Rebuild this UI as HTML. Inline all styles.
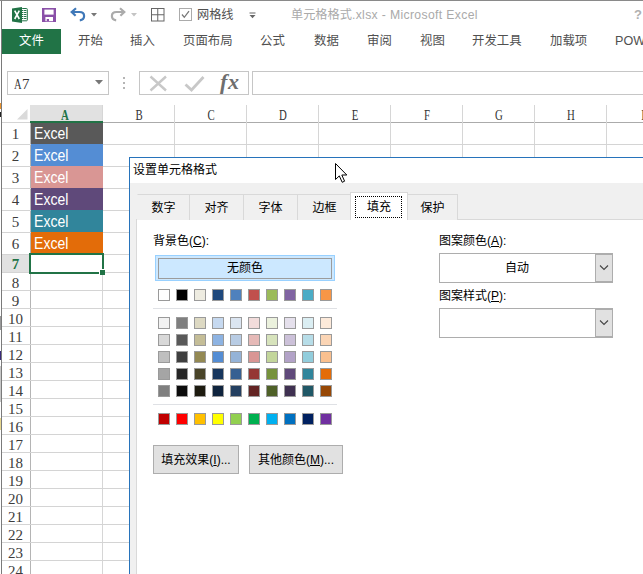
<!DOCTYPE html>
<html lang="zh-CN"><head><meta charset="utf-8"><title>Excel</title>
<style>
*{box-sizing:border-box;margin:0;padding:0}
html,body{width:643px;height:574px;overflow:hidden;background:#fff}
body{position:relative;font-family:"Liberation Sans","Noto Sans CJK SC",sans-serif;font-size:12px;color:#444}
.a{position:absolute}
.t{position:absolute;white-space:nowrap;line-height:16px;height:16px}
.rt{position:absolute;top:33px;white-space:nowrap;line-height:16px;height:16px;font-size:12.4px;color:#505050}
.hl{position:absolute;height:1px;background:#d4d4d4}
.vl{position:absolute;width:1px;background:#d6d6d6}
.rn{position:absolute;left:2px;width:27px;text-align:center;font-family:"Liberation Serif",serif;font-size:15px;color:#3c3c3c;line-height:18px;height:18px}
.cn{position:absolute;top:106px;width:72px;text-align:center;font-family:"Liberation Serif",serif;font-size:15px;color:#333;line-height:18px;height:18px;transform:scaleX(0.72)}
.cell{position:absolute;left:31px;width:72px;height:22px;color:#fff}
.cell span{position:absolute;left:3px;top:0;font-size:15.8px;line-height:23px;transform:scaleX(0.89);transform-origin:0 50%}
.sw{position:absolute;width:12px;height:12px;border:1px solid #9a9a9a}
.tab{position:absolute;top:194px;height:26px;border:1px solid #d9d9d9;border-bottom:none;background:#f0f0f0;color:#000;text-align:center;line-height:27px;font-size:12px}
.dl{position:absolute;color:#000;font-size:12px;line-height:16px;white-space:nowrap}
.btn{position:absolute;border:1px solid #adadad;background:#e1e1e1;color:#000;font-size:12px;text-align:center;white-space:nowrap}
u{text-decoration:underline}
</style></head><body>

<div class="a" style="left:1px;top:0;width:1px;height:574px;background:#7a7a7a"></div>
<div class="a" style="left:0;top:0;width:643px;height:1px;background:#8a8a8a"></div>
<div class="a" style="left:0;top:103px;width:1px;height:6px;background:#e8922c"></div><div class="a" style="left:0;top:112px;width:1px;height:5px;background:#222"></div><div class="a" style="left:0;top:316px;width:1px;height:14px;background:#999"></div><div class="a" style="left:0;top:351px;width:1px;height:9px;background:#3a2a7a"></div><div class="a" style="left:0;top:366px;width:1px;height:36px;background:#c8c8c8"></div><div class="a" style="left:0;top:418px;width:1px;height:12px;background:#e8d890"></div>
<svg class="a" style="left:12px;top:7px" width="17" height="17" viewBox="0 0 17 17">
<rect x="9.5" y="1.5" width="5.8" height="12.3" rx="0.8" fill="#fff" stroke="#217346" stroke-width="1"/>
<path d="M10 3.5h4.4M10 5.5h4.4M10 7.5h4.4M10 9.5h4.4M10 11.5h4.4" stroke="#217346" stroke-width="1"/>
<path d="M11.6 2.5v10.5" stroke="#fff" stroke-width="0.7"/>
<path d="M0 1.4 L10 0 L10 16 L0 14.5 Z" fill="#217346"/>
<path d="M2.7 3.7 L7.3 12 M7.3 3.7 L2.7 12" stroke="#fff" stroke-width="1.6"/>
</svg>
<svg class="a" style="left:42px;top:8px" width="14" height="14" viewBox="0 0 14 14">
<rect x="0" y="0" width="14" height="14" fill="#8a50a8"/>
<rect x="2.4" y="1.6" width="9.2" height="5" fill="#fff"/>
<rect x="3.4" y="9" width="7.6" height="4.2" fill="#fff"/>
<rect x="4.7" y="11" width="2.3" height="2.2" fill="#8a50a8"/>
</svg>
<svg class="a" style="left:70px;top:7px" width="16" height="15" viewBox="0 0 16 15">
<path d="M2.5 5 H9.5 C12.6 5 14.1 6.9 14.1 9 C14.1 11.4 12.4 13 9.8 13.3" fill="none" stroke="#3f78b8" stroke-width="2.2"/>
<path d="M6 1.2 L1.7 5 L5.6 8.7" fill="none" stroke="#3f78b8" stroke-width="2.2"/>
</svg>
<svg class="a" style="left:91px;top:13px" width="6" height="4"><path d="M0 0H6L3 3.5Z" fill="#777"/></svg>
<svg class="a" style="left:110px;top:7px" width="16" height="15" viewBox="0 0 16 15">
<path d="M13.5 5 H6.5 C3.4 5 1.9 6.9 1.9 9 C1.9 11.4 3.6 13 6.2 13.3" fill="none" stroke="#ababab" stroke-width="2.2"/>
<path d="M10 1.2 L14.3 5 L10.4 8.7" fill="none" stroke="#ababab" stroke-width="2.2"/>
</svg>
<svg class="a" style="left:131px;top:13px" width="6" height="4"><path d="M0 0H6L3 3.5Z" fill="#c4c4c4"/></svg>
<svg class="a" style="left:151px;top:8px" width="14" height="14" viewBox="0 0 14 14">
<rect x="0.5" y="0.5" width="12.5" height="12.5" fill="none" stroke="#666" stroke-width="1"/>
<path d="M6.75 0.5V13M0.5 6.75H13" stroke="#666" stroke-width="1"/></svg>
<svg class="a" style="left:179px;top:8px" width="13" height="13" viewBox="0 0 13 13">
<rect x="0.5" y="0.5" width="12" height="12" fill="#fff" stroke="#ababab"/>
<path d="M3 6.5 L5.3 9.3 L10 3.2" fill="none" stroke="#777" stroke-width="1.3"/></svg>
<div class="t" style="left:197px;top:7px;font-size:12.2px;color:#505050">网格线</div>
<svg class="a" style="left:249px;top:12px" width="7" height="7"><rect x="0.5" y="0.5" width="6" height="1" fill="#666"/><path d="M0.5 3H6.5L3.5 6.3Z" fill="#666"/></svg>
<div class="t" style="left:291px;top:7px;font-size:12.2px;color:#aaa"><span>单元格格式</span><span style="letter-spacing:0.35px">.xlsx - Microsoft Excel</span></div>
<div class="t" style="left:634px;top:7px;font-size:13px;font-weight:bold;color:#b0b0b0">?</div>
<div class="a" style="left:2px;top:29px;width:59px;height:25px;background:#217346"></div>
<div class="rt" style="left:19px;color:#fff">文件</div>
<div class="rt" style="left:78px">开始</div>
<div class="rt" style="left:130px">插入</div>
<div class="rt" style="left:183px">页面布局</div>
<div class="rt" style="left:260px">公式</div>
<div class="rt" style="left:314px">数据</div>
<div class="rt" style="left:367px">审阅</div>
<div class="rt" style="left:420px">视图</div>
<div class="rt" style="left:472px">开发工具</div>
<div class="rt" style="left:550px">加载项</div>
<div class="rt" style="left:615px;font-size:12.6px">POWERPIVOT</div>
<div class="a" style="left:7px;top:71px;width:102px;height:24px;border:1px solid #c6c6c6;background:#fff"></div>
<div class="t" style="left:14px;top:75px;font-family:'Liberation Serif',serif;font-size:15px;line-height:18px;height:18px;color:#333"><span style="display:inline-block;transform:scaleX(0.7);transform-origin:0 50%;width:8px">A</span><span>7</span></div>
<svg class="a" style="left:95px;top:80px" width="8" height="5"><path d="M0 0H8L4 4.5Z" fill="#777"/></svg>
<div class="a" style="left:123px;top:77px;width:2px;height:2px;background:#b5b5b5"></div><div class="a" style="left:123px;top:82px;width:2px;height:2px;background:#b5b5b5"></div><div class="a" style="left:123px;top:87px;width:2px;height:2px;background:#b5b5b5"></div>
<div class="a" style="left:139px;top:71px;width:110px;height:24px;border:1px solid #c6c6c6;background:#fff"></div>
<svg class="a" style="left:149px;top:75px" width="19" height="17" viewBox="0 0 19 17"><path d="M1.5 1.5L17 15.5M17 1.5L1.5 15.5" stroke="#c8c8c8" stroke-width="2.4"/></svg>
<svg class="a" style="left:184px;top:75px" width="21" height="17" viewBox="0 0 21 17"><path d="M1.5 9.5L7.5 15L19.5 2" fill="none" stroke="#c8c8c8" stroke-width="2.8"/></svg>
<div class="a" style="left:220px;top:69px;width:24px;height:26px;font-family:'Liberation Serif',serif;font-style:italic;font-weight:bold;font-size:22px;line-height:26px;color:#6e6e6e;letter-spacing:0.6px">fx</div>
<div class="a" style="left:252px;top:71px;width:400px;height:24px;border:1px solid #c6c6c6;background:#fff"></div>
<div class="a" style="left:30px;top:105px;width:73px;height:16px;background:#e1e1e1"></div>
<div class="a" style="left:30px;top:121px;width:73px;height:2px;background:#217346"></div>
<svg class="a" style="left:17px;top:109px" width="11" height="11"><path d="M10.5 0V10.5H0Z" fill="#dadada"/></svg>
<div class="hl" style="left:2px;top:122px;width:28px"></div>
<div class="hl" style="left:103px;top:122px;width:540px;background:#ababab"></div>
<div class="cn" style="left:29px;color:#217346;font-weight:bold">A</div>
<div class="vl" style="left:102px;top:105px;height:469px"></div>
<div class="cn" style="left:103px">B</div>
<div class="vl" style="left:174px;top:105px;height:469px"></div>
<div class="cn" style="left:175px">C</div>
<div class="vl" style="left:246px;top:105px;height:469px"></div>
<div class="cn" style="left:247px">D</div>
<div class="vl" style="left:318px;top:105px;height:469px"></div>
<div class="cn" style="left:319px">E</div>
<div class="vl" style="left:390px;top:105px;height:469px"></div>
<div class="cn" style="left:391px">F</div>
<div class="vl" style="left:462px;top:105px;height:469px"></div>
<div class="cn" style="left:463px">G</div>
<div class="vl" style="left:534px;top:105px;height:469px"></div>
<div class="cn" style="left:535px">H</div>
<div class="vl" style="left:606px;top:105px;height:469px"></div>
<div class="cn" style="left:607px">I</div>
<div class="vl" style="left:678px;top:105px;height:469px"></div>
<div class="vl" style="left:30px;top:123px;height:451px;background:#b4b4b4"></div>
<div class="hl" style="left:2px;top:144px;width:641px"></div>
<div class="rn" style="top:123px;height:21px;line-height:22px">1</div>
<div class="hl" style="left:2px;top:166px;width:641px"></div>
<div class="rn" style="top:145px;height:21px;line-height:22px">2</div>
<div class="hl" style="left:2px;top:188px;width:641px"></div>
<div class="rn" style="top:167px;height:21px;line-height:22px">3</div>
<div class="hl" style="left:2px;top:210px;width:641px"></div>
<div class="rn" style="top:189px;height:21px;line-height:22px">4</div>
<div class="hl" style="left:2px;top:232px;width:641px"></div>
<div class="rn" style="top:211px;height:21px;line-height:22px">5</div>
<div class="hl" style="left:2px;top:254px;width:641px"></div>
<div class="rn" style="top:233px;height:21px;line-height:22px">6</div>
<div class="hl" style="left:2px;top:272px;width:641px"></div>
<div class="a" style="left:2px;top:255px;width:28px;height:17px;background:#e1e1e1"></div>
<div class="rn" style="top:255px;height:17px;line-height:18px;color:#217346;font-weight:bold">7</div>
<div class="hl" style="left:2px;top:290px;width:641px"></div>
<div class="rn" style="top:273px;height:17px;line-height:20px">8</div>
<div class="hl" style="left:2px;top:308px;width:641px"></div>
<div class="rn" style="top:291px;height:17px;line-height:20px">9</div>
<div class="hl" style="left:2px;top:326px;width:641px"></div>
<div class="rn" style="top:309px;height:17px;line-height:20px">10</div>
<div class="hl" style="left:2px;top:344px;width:641px"></div>
<div class="rn" style="top:327px;height:17px;line-height:20px">11</div>
<div class="hl" style="left:2px;top:362px;width:641px"></div>
<div class="rn" style="top:345px;height:17px;line-height:20px">12</div>
<div class="hl" style="left:2px;top:380px;width:641px"></div>
<div class="rn" style="top:363px;height:17px;line-height:20px">13</div>
<div class="hl" style="left:2px;top:398px;width:641px"></div>
<div class="rn" style="top:381px;height:17px;line-height:20px">14</div>
<div class="hl" style="left:2px;top:416px;width:641px"></div>
<div class="rn" style="top:399px;height:17px;line-height:20px">15</div>
<div class="hl" style="left:2px;top:434px;width:641px"></div>
<div class="rn" style="top:417px;height:17px;line-height:20px">16</div>
<div class="hl" style="left:2px;top:452px;width:641px"></div>
<div class="rn" style="top:435px;height:17px;line-height:20px">17</div>
<div class="hl" style="left:2px;top:470px;width:641px"></div>
<div class="rn" style="top:453px;height:17px;line-height:20px">18</div>
<div class="hl" style="left:2px;top:488px;width:641px"></div>
<div class="rn" style="top:471px;height:17px;line-height:20px">19</div>
<div class="hl" style="left:2px;top:506px;width:641px"></div>
<div class="rn" style="top:489px;height:17px;line-height:20px">20</div>
<div class="hl" style="left:2px;top:524px;width:641px"></div>
<div class="rn" style="top:507px;height:17px;line-height:20px">21</div>
<div class="hl" style="left:2px;top:542px;width:641px"></div>
<div class="rn" style="top:525px;height:17px;line-height:20px">22</div>
<div class="hl" style="left:2px;top:560px;width:641px"></div>
<div class="rn" style="top:543px;height:17px;line-height:20px">23</div>
<div class="hl" style="left:2px;top:578px;width:641px"></div>
<div class="rn" style="top:561px;height:17px;line-height:20px">24</div>
<div class="cell" style="top:122px;background:#595959;"><span>Excel</span></div>
<div class="cell" style="top:144px;background:#548DD4;"><span>Excel</span></div>
<div class="cell" style="top:166px;background:#D99694;"><span>Excel</span></div>
<div class="cell" style="top:188px;background:#5F497A;"><span>Excel</span></div>
<div class="cell" style="top:210px;background:#31859B;"><span>Excel</span></div>
<div class="cell" style="top:232px;background:#E36C09;"><span>Excel</span></div>
<div class="a" style="left:30px;top:121px;width:73px;height:2px;background:#217346"></div>
<div class="a" style="left:29px;top:253px;width:75px;height:21px;border:2px solid #217346;background:#fff"></div>
<div class="a" style="left:99px;top:269px;width:6px;height:6px;background:#217346;border:1px solid #fff;border-right:none;border-bottom:none"></div>
<div class="a" style="left:129px;top:157px;width:520px;height:420px;border:1px solid #2773bb;background:#f0f0f0"></div>
<div class="a" style="left:130px;top:158px;width:513px;height:25px;background:#fff"></div>
<div class="dl" style="left:133px;top:162px">设置单元格格式</div>
<svg class="a" style="left:334px;top:162px" width="14" height="22" viewBox="0 0 14 22">
<path d="M1.5 1.5 V17.5 L5.3 13.9 L8.2 20.3 L10.6 19.2 L7.8 13 H12.8 Z" fill="#fff" stroke="#000" stroke-width="1"/></svg>
<div class="a" style="left:136px;top:219px;width:520px;height:360px;border:1px solid #d9d9d9;background:#fff"></div>
<div class="tab" style="left:137px;width:53px;border-left-color:#f0f0f0">数字</div>
<div class="tab" style="left:189px;width:55px">对齐</div>
<div class="tab" style="left:243px;width:55px">字体</div>
<div class="tab" style="left:297px;width:55px">边框</div>
<div class="tab" style="left:407px;width:51px">保护</div>
<div class="tab" style="left:350px;width:58px;top:192px;height:28px;background:#fff;line-height:29px">填充</div>
<div class="a" style="left:355px;top:196px;width:47px;height:22px;border:1px dotted #000"></div>
<div class="dl" style="left:153px;top:233px">背景色(<u>C</u>):</div>
<div class="a" style="left:155px;top:255px;width:180px;height:26px;border:1px solid #99d1ff;background:#cce8ff"></div>
<div class="a" style="left:158px;top:258px;width:174px;height:21px;border:1px solid #9c9c9c;background:#cce8ff;color:#000;text-align:center;line-height:19px;font-size:12px">无颜色</div>
<div class="sw" style="left:158px;top:289px;background:#FFFFFF"></div>
<div class="sw" style="left:176px;top:289px;background:#000000"></div>
<div class="sw" style="left:194px;top:289px;background:#EEECE1"></div>
<div class="sw" style="left:212px;top:289px;background:#1F497D"></div>
<div class="sw" style="left:230px;top:289px;background:#4F81BD"></div>
<div class="sw" style="left:248px;top:289px;background:#C0504D"></div>
<div class="sw" style="left:266px;top:289px;background:#9BBB59"></div>
<div class="sw" style="left:284px;top:289px;background:#8064A2"></div>
<div class="sw" style="left:302px;top:289px;background:#4BACC6"></div>
<div class="sw" style="left:320px;top:289px;background:#F79646"></div>
<div class="a" style="left:153px;top:308px;width:184px;height:1px;background:#dfe1e5"></div>
<div class="sw" style="left:158px;top:317px;background:#F2F2F2"></div>
<div class="sw" style="left:176px;top:317px;background:#7F7F7F"></div>
<div class="sw" style="left:194px;top:317px;background:#DDD9C3"></div>
<div class="sw" style="left:212px;top:317px;background:#C6D9F0"></div>
<div class="sw" style="left:230px;top:317px;background:#DBE5F1"></div>
<div class="sw" style="left:248px;top:317px;background:#F2DCDB"></div>
<div class="sw" style="left:266px;top:317px;background:#EBF1DD"></div>
<div class="sw" style="left:284px;top:317px;background:#E5E0EC"></div>
<div class="sw" style="left:302px;top:317px;background:#DBEEF3"></div>
<div class="sw" style="left:320px;top:317px;background:#FDEADA"></div>
<div class="sw" style="left:158px;top:334px;background:#D8D8D8"></div>
<div class="sw" style="left:176px;top:334px;background:#595959"></div>
<div class="sw" style="left:194px;top:334px;background:#C4BD97"></div>
<div class="sw" style="left:212px;top:334px;background:#8DB3E2"></div>
<div class="sw" style="left:230px;top:334px;background:#B8CCE4"></div>
<div class="sw" style="left:248px;top:334px;background:#E5B9B7"></div>
<div class="sw" style="left:266px;top:334px;background:#D7E3BC"></div>
<div class="sw" style="left:284px;top:334px;background:#CCC1D9"></div>
<div class="sw" style="left:302px;top:334px;background:#B7DDE8"></div>
<div class="sw" style="left:320px;top:334px;background:#FBD5B5"></div>
<div class="sw" style="left:158px;top:351px;background:#BFBFBF"></div>
<div class="sw" style="left:176px;top:351px;background:#3F3F3F"></div>
<div class="sw" style="left:194px;top:351px;background:#938953"></div>
<div class="sw" style="left:212px;top:351px;background:#548DD4"></div>
<div class="sw" style="left:230px;top:351px;background:#95B3D7"></div>
<div class="sw" style="left:248px;top:351px;background:#D99694"></div>
<div class="sw" style="left:266px;top:351px;background:#C3D69B"></div>
<div class="sw" style="left:284px;top:351px;background:#B2A2C7"></div>
<div class="sw" style="left:302px;top:351px;background:#92CDDC"></div>
<div class="sw" style="left:320px;top:351px;background:#FAC08F"></div>
<div class="sw" style="left:158px;top:368px;background:#A5A5A5"></div>
<div class="sw" style="left:176px;top:368px;background:#262626"></div>
<div class="sw" style="left:194px;top:368px;background:#494429"></div>
<div class="sw" style="left:212px;top:368px;background:#17365D"></div>
<div class="sw" style="left:230px;top:368px;background:#366092"></div>
<div class="sw" style="left:248px;top:368px;background:#953734"></div>
<div class="sw" style="left:266px;top:368px;background:#76923C"></div>
<div class="sw" style="left:284px;top:368px;background:#5F497A"></div>
<div class="sw" style="left:302px;top:368px;background:#31859B"></div>
<div class="sw" style="left:320px;top:368px;background:#E36C09"></div>
<div class="sw" style="left:158px;top:385px;background:#7F7F7F"></div>
<div class="sw" style="left:176px;top:385px;background:#0C0C0C"></div>
<div class="sw" style="left:194px;top:385px;background:#1D1B10"></div>
<div class="sw" style="left:212px;top:385px;background:#0F243E"></div>
<div class="sw" style="left:230px;top:385px;background:#244061"></div>
<div class="sw" style="left:248px;top:385px;background:#632423"></div>
<div class="sw" style="left:266px;top:385px;background:#4F6128"></div>
<div class="sw" style="left:284px;top:385px;background:#3F3151"></div>
<div class="sw" style="left:302px;top:385px;background:#205867"></div>
<div class="sw" style="left:320px;top:385px;background:#974806"></div>
<div class="a" style="left:153px;top:404px;width:184px;height:1px;background:#dfe1e5"></div>
<div class="sw" style="left:158px;top:413px;background:#C00000"></div>
<div class="sw" style="left:176px;top:413px;background:#FF0000"></div>
<div class="sw" style="left:194px;top:413px;background:#FFC000"></div>
<div class="sw" style="left:212px;top:413px;background:#FFFF00"></div>
<div class="sw" style="left:230px;top:413px;background:#92D050"></div>
<div class="sw" style="left:248px;top:413px;background:#00B050"></div>
<div class="sw" style="left:266px;top:413px;background:#00B0F0"></div>
<div class="sw" style="left:284px;top:413px;background:#0070C0"></div>
<div class="sw" style="left:302px;top:413px;background:#002060"></div>
<div class="sw" style="left:320px;top:413px;background:#7030A0"></div>
<div class="btn" style="left:153px;top:445px;width:86px;height:29px;line-height:28px">填充效果(<u>I</u>)...</div>
<div class="btn" style="left:249px;top:445px;width:94px;height:29px;line-height:28px">其他颜色(<u>M</u>)...</div>
<div class="dl" style="left:439px;top:233px">图案颜色(<u>A</u>):</div>
<div class="a" style="left:439px;top:253px;width:174px;height:30px;border:1px solid #adadad;background:#fff"></div>
<div class="dl" style="left:505px;top:260px">自动</div>
<div class="a" style="left:595px;top:254px;width:18px;height:28px;border:1px solid #adadad;background:#e1e1e1"></div>
<svg class="a" style="left:599px;top:264px" width="10" height="7"><path d="M1 1.5L5 5.5L9 1.5" fill="none" stroke="#444" stroke-width="1.1"/></svg>
<div class="dl" style="left:439px;top:288px">图案样式(<u>P</u>):</div>
<div class="a" style="left:439px;top:308px;width:174px;height:30px;border:1px solid #adadad;background:#fff"></div>
<div class="a" style="left:595px;top:309px;width:18px;height:28px;border:1px solid #adadad;background:#e1e1e1"></div>
<svg class="a" style="left:599px;top:319px" width="10" height="7"><path d="M1 1.5L5 5.5L9 1.5" fill="none" stroke="#444" stroke-width="1.1"/></svg>
</body></html>
